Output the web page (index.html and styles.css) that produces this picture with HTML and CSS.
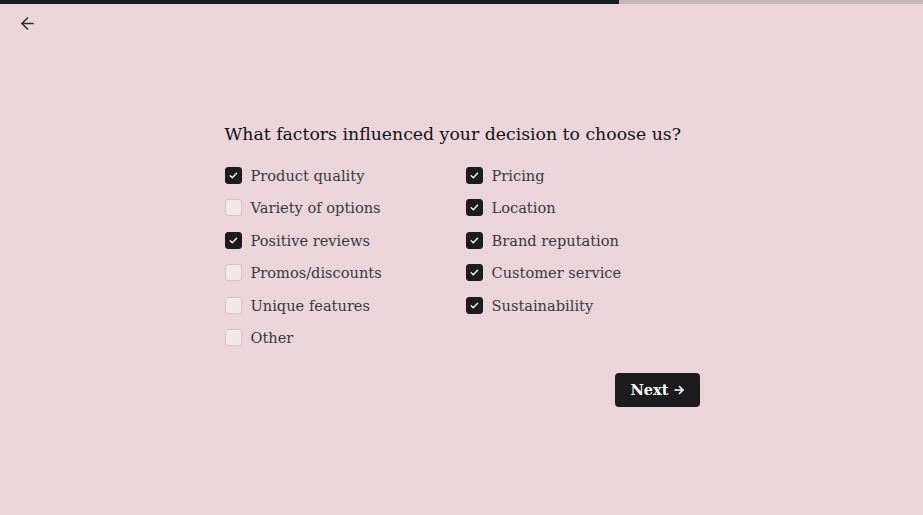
FILE: index.html
```html
<!DOCTYPE html>
<html lang="en">

<head>
	<meta charset="utf-8">
	<meta name="viewport" content="width=device-width, initial-scale=1.0">
	<title>Survey</title>
	<link rel="stylesheet" href="styles.css">
</head>

<body>
	<div class="progress"><div class="progress-fill"></div></div>

	<button class="back" aria-label="Back">
		<svg width="19" height="19" viewBox="0 0 24 24" fill="none" stroke="currentColor" stroke-width="2" stroke-linecap="round" stroke-linejoin="round"><path d="M19 12H5"/><path d="M12 19l-7-7 7-7"/></svg>
	</button>

	<div class="survey">
		<h2>What factors influenced your decision to choose us?</h2>

		<div class="options">
			<label class="option"><input type="checkbox" checked><span class="box"></span>Product quality</label>
			<label class="option"><input type="checkbox" checked><span class="box"></span>Pricing</label>
			<label class="option"><input type="checkbox"><span class="box"></span>Variety of options</label>
			<label class="option"><input type="checkbox" checked><span class="box"></span>Location</label>
			<label class="option"><input type="checkbox" checked><span class="box"></span>Positive reviews</label>
			<label class="option"><input type="checkbox" checked><span class="box"></span>Brand reputation</label>
			<label class="option"><input type="checkbox"><span class="box"></span>Promos/discounts</label>
			<label class="option"><input type="checkbox" checked><span class="box"></span>Customer service</label>
			<label class="option"><input type="checkbox"><span class="box"></span>Unique features</label>
			<label class="option"><input type="checkbox" checked><span class="box"></span>Sustainability</label>
			<label class="option"><input type="checkbox"><span class="box"></span>Other</label>
		</div>

		<div class="actions">
			<button class="next">Next
				<svg width="12" height="12" viewBox="0 0 24 24" fill="none" stroke="currentColor" stroke-width="3.2" stroke-linecap="round" stroke-linejoin="round"><path d="M4 12h16"/><path d="M13 5l7 7-7 7"/></svg>
			</button>
		</div>
	</div>
</body>

</html>
```

FILE: styles.css
```css
* {
	box-sizing: border-box;
}

html, body {
	height: 100%;
}

body {
	margin: 0;
	background: #ecd5da;
	font-family: "DejaVu Serif", "Liberation Serif", serif;
	color: #38383e;
}

/* progress bar at the top */
.progress {
	height: 4px;
	background: #c8b5bb;
}

.progress-fill {
	width: 619px;
	height: 100%;
	background: #1c1c1f;
}

.back {
	display: block;
	margin: 10px 0 0 18px;
	padding: 0;
	border: none;
	background: none;
	color: #2c2c30;
	height: 19px;
	cursor: pointer;
}

.survey {
	width: 476px;
	margin: 91px auto 0;
}

.survey h2 {
	margin: 0 0 19px;
	padding-left: 1px;
	font-size: 17.3px;
	font-weight: normal;
	color: #111114;
	white-space: nowrap;
}

.options {
	display: grid;
	grid-template-columns: 241px 1fr;
	row-gap: 8.6px;
}

.option {
	display: flex;
	align-items: center;
	height: 24px;
	font-size: 14.6px;
	cursor: pointer;
}

.option input {
	display: none;
}

.box {
	width: 17px;
	height: 17px;
	margin: 0 9px 0 1px;
	border: 1px solid #d9c3c9;
	border-radius: 3px;
	background: #f4e7ea;
	flex-shrink: 0;
}

.option input:checked + .box {
	border-color: #1c1c1f;
	background: #1c1c1f url("data:image/svg+xml,%3Csvg xmlns='http://www.w3.org/2000/svg' viewBox='0 0 16 16'%3E%3Cpath d='M4.5 8.2l2.2 2.2 4.6-4.8' fill='none' stroke='white' stroke-width='1.4' stroke-linecap='round' stroke-linejoin='round'/%3E%3C/svg%3E") center / 15px no-repeat;
}

.actions {
	display: flex;
	justify-content: flex-end;
	margin-top: 23px;
}

.next {
	display: flex;
	align-items: center;
	gap: 4px;
	height: 34px;
	padding: 0 15px;
	border: none;
	border-radius: 4px;
	background: #1c1c1f;
	color: #fff;
	font-family: inherit;
	font-size: 14.6px;
	font-weight: bold;
	cursor: pointer;
}
```
